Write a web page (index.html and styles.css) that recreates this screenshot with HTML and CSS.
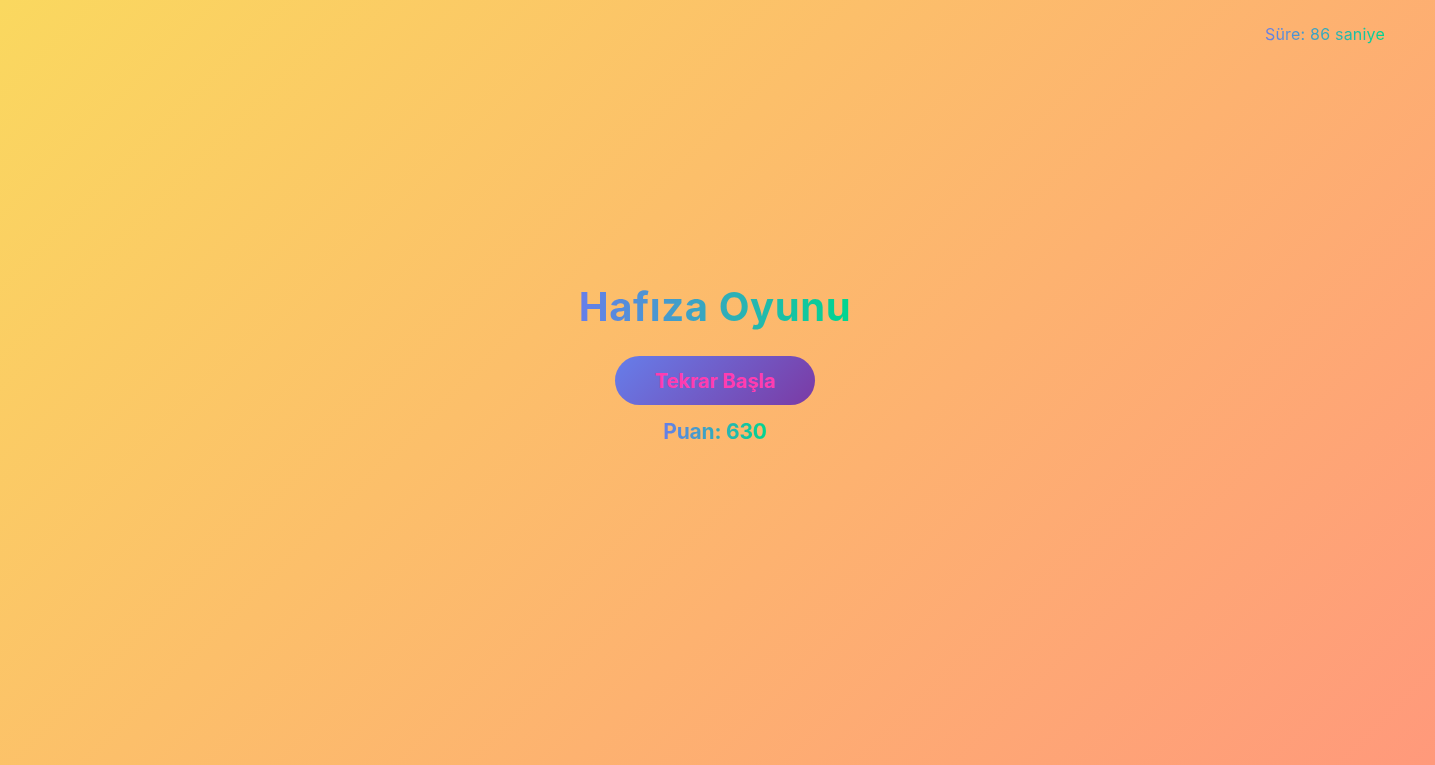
FILE: index.html
```html
<!DOCTYPE html>
<html lang="tr">
<head>
<meta charset="utf-8">
<title>Hafıza Oyunu</title>
<link rel="stylesheet" href="styles.css">
</head>
<body>
<header class="topbar">
  <div class="timer">Süre: 86 saniye</div>
</header>
<main class="game">
  <h1 class="title">Hafıza Oyunu</h1>
  <button class="restart">Tekrar Başla</button>
  <div class="score">Puan: 630</div>
</main>
</body>
</html>
```
FILE: styles.css
```css
html, body {
  margin: 0;
  height: 100%;
}
body {
  font-family: "Inter", "Noto Sans", sans-serif;
  background: linear-gradient(135deg, #fad85f 0%, #ff997b 100%);
  display: flex;
  flex-direction: column;
  overflow: hidden;
}
.title, .score, .timer {
  background: linear-gradient(90deg, #667eea 0%, #00d68f 100%);
  -webkit-background-clip: text;
  background-clip: text;
  color: transparent;
}
.topbar {
  display: flex;
  justify-content: flex-end;
  padding: 23px 50px 0 0;
}
.timer {
  font-size: 16px;
  font-weight: 400;
  letter-spacing: 0.2px;
  line-height: 22px;
}
.game {
  flex: 1;
  display: flex;
  flex-direction: column;
  align-items: center;
  padding: 238px 5px 0 0;
}
.title {
  margin: 0;
  font-size: 40px;
  font-weight: 700;
  line-height: 48px;
  letter-spacing: 0.6px;
}
.restart {
  margin-top: 25px;
  width: 200px;
  height: 49px;
  border: none;
  border-radius: 25px;
  background: linear-gradient(135deg, #667eea 0%, #7b3aa4 100%);
  color: #ff3cb0;
  font-family: inherit;
  font-size: 20px;
  font-weight: 700;
  cursor: pointer;
}
.score {
  margin-top: 13px;
  font-size: 21px;
  font-weight: 700;
  line-height: 28px;
  letter-spacing: -0.2px;
}
```
